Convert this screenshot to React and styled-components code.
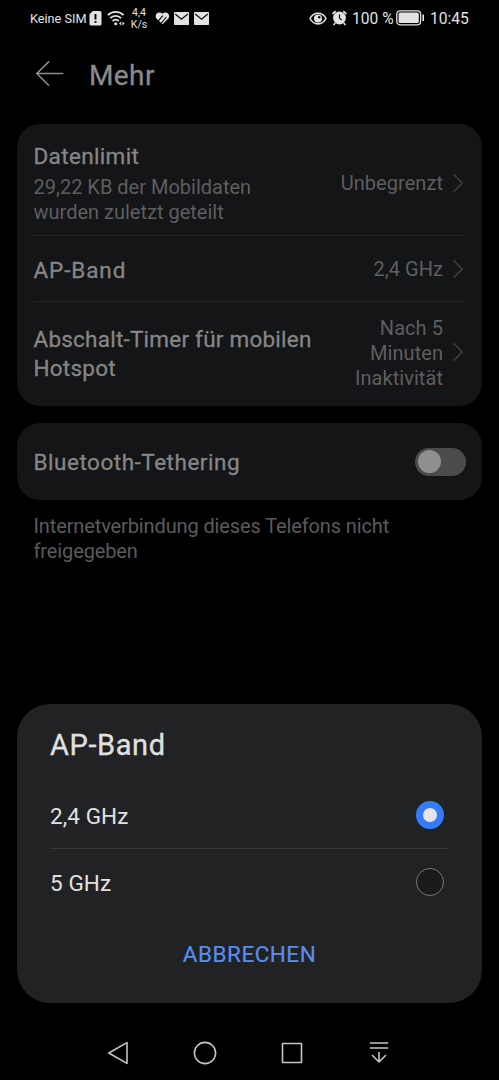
import React, { useState } from "react";
import styled, { createGlobalStyle } from "styled-components";

const GlobalStyle = createGlobalStyle`
  body {
    margin: 0;
    background: #000;
    font-family: Roboto, "Noto Sans", sans-serif;
  }
  * {
    box-sizing: border-box;
  }
`;

const Screen = styled.div`
  position: relative;
  display: flex;
  flex-direction: column;
  width: 499px;
  height: 1080px;
  background: #000;
  overflow: hidden;
`;

const StatusBar = styled.div`
  display: flex;
  justify-content: space-between;
  align-items: center;
  height: 36px;
  padding: 0 30px 0 30px;
  color: #e2e2e2;
`;

const StatusGroup = styled.div`
  display: flex;
  align-items: center;
  gap: ${(p) => p.$gap}px;
  height: 35px;
  svg {
    display: block;
    flex: none;
  }
`;

const StatusText = styled.span`
  width: ${(p) => p.$width}px;
  padding-top: 1px;
  font-size: ${(p) => p.$size}px;
  line-height: 20px;
  white-space: nowrap;
`;

const NetSpeed = styled.div`
  width: 18px;
  margin: 1px 2px 0 0;
  font-size: 10.5px;
  line-height: 12px;
  text-align: center;
`;

const Header = styled.div`
  display: flex;
  align-items: center;
  height: 76px;
  padding-left: 35px;
  margin-bottom: 11.5px;
`;

const PageTitle = styled.h1`
  margin: 3px 0 0 25px;
  color: #8b8b8b;
  font-size: 28px;
  font-weight: 400;
  line-height: 36px;
  letter-spacing: 0.4px;
  -webkit-text-stroke: 0.3px;
`;

const Card = styled.div`
  margin: 0 17px 17px;
  padding: 0 16px 0 16.5px;
  background: #141517;
  border-radius: 23px;
`;

const Row = styled.div`
  display: flex;
  justify-content: space-between;
  align-items: center;
  height: ${(p) => p.$height}px;
  padding: ${(p) => p.$pad || "0"};
  border-bottom: ${(p) => (p.$last ? "none" : "1px solid #222325")};
`;

const RowTitle = styled.div`
  padding-top: 2px;
  color: #868687;
  font-size: 22.5px;
  font-weight: 400;
  line-height: 29px;
  letter-spacing: ${(p) => p.$spacing || 0}px;
  -webkit-text-stroke: 0.3px;
  white-space: nowrap;
`;

const RowHint = styled.div`
  margin-top: 4px;
  color: #5d5e5f;
  font-size: 20px;
  line-height: 25.5px;
  white-space: nowrap;
`;

const RowEnd = styled.div`
  display: flex;
  align-items: center;
  gap: 9px;
`;

const RowValue = styled.div`
  padding-top: 2px;
  color: #5d5e5f;
  font-size: 20px;
  line-height: 25.2px;
  letter-spacing: 0.05px;
  text-align: right;
`;

const Track = styled.div`
  display: flex;
  align-items: center;
  justify-content: ${(p) => (p.$on ? "flex-end" : "flex-start")};
  width: 51px;
  height: 28px;
  padding: 0 2.5px;
  border-radius: 14px;
  background: #4b4b4b;
`;

const Knob = styled.div`
  width: 23px;
  height: 23px;
  border-radius: 50%;
  background: #8f8f8f;
`;

const Note = styled.div`
  margin: -3.5px 33.5px 0;
  color: #5b5b5b;
  font-size: 20px;
  line-height: 25.5px;
  letter-spacing: -0.12px;
`;

const Dialog = styled.div`
  position: absolute;
  left: 17px;
  right: 17px;
  bottom: 77px;
  height: 299px;
  padding: 23px 33px 0;
  border-radius: 33px;
  background: #212224;
  color: #e0e0e0;
`;

const DialogTitle = styled.h2`
  margin: 0 0 18.5px;
  font-size: 29px;
  font-weight: 400;
  line-height: 36px;
  letter-spacing: 0.6px;
  -webkit-text-stroke: 0.3px;
`;

const Option = styled.div`
  display: flex;
  justify-content: space-between;
  align-items: center;
  height: 67px;
  padding-right: 5.5px;
  font-size: 22.5px;
  letter-spacing: 0.1px;
  border-bottom: 1px solid ${(p) => (p.$last ? "transparent" : "#37383a")};
  cursor: pointer;
`;

const OptionLabel = styled.span`
  padding-top: 2px;
`;

const Radio = styled.div`
  width: 28px;
  height: 28px;
  border-radius: 50%;
  border: ${(p) => (p.$checked ? "7px solid #337bf7" : "1px solid #77787a")};
  background: ${(p) => (p.$checked ? "#e6e4e8" : "#191a1b")};
`;

const CancelButton = styled.button`
  display: block;
  margin: 22.5px auto 0;
  padding: 0;
  border: none;
  background: none;
  color: #5a8dee;
  font-family: inherit;
  font-size: 22.5px;
  font-weight: 400;
  line-height: 32px;
  letter-spacing: 0.5px;
  -webkit-text-stroke: 0.2px;
  cursor: pointer;
`;

const NavBar = styled.div`
  display: flex;
  justify-content: space-between;
  align-items: center;
  height: 55px;
  margin-top: auto;
  padding: 0 108px 0 106px;
`;

function Chevron() {
  return (
    <svg width="14" height="20" viewBox="0 0 14 20" fill="none" stroke="#3c3d3f" strokeWidth="1.6">
      <path d="M1.5 1.2L10.2 10L1.5 18.8" />
    </svg>
  );
}

function SimIcon() {
  return (
    <svg width="13" height="17" viewBox="0 0 13 17">
      <path d="M3.8 1H11A1.5 1.5 0 0 1 12.5 2.5V14A1.5 1.5 0 0 1 11 15.5H2A1.5 1.5 0 0 1 .5 14V4.3Z" fill="#e2e2e2" />
      <path d="M6.5 4V9.4M6.5 11V12.8" stroke="#000" strokeWidth="1.9" />
    </svg>
  );
}

function WifiIcon() {
  return (
    <svg width="19" height="17" viewBox="0 0 19 17" fill="none" stroke="#e2e2e2" strokeWidth="1.8">
      <path d="M.8 5.2C5.2 .8 12.2 .8 16.6 5.2" />
      <path d="M3.2 8.2C6.4 5 11 5 14.2 8.2" />
      <path d="M5.6 11C7.4 9.2 10 9.2 11.8 11" />
      <circle cx="8.7" cy="13.8" r="1.5" fill="#e2e2e2" stroke="none" />
      <path d="M14.2 11.4V15.6L12 13.5ZM15.4 11.4V15.6L17.6 13.5Z" fill="#e2e2e2" stroke="none" />
    </svg>
  );
}

function HealthIcon() {
  return (
    <svg width="15" height="14" viewBox="0 0 15 14">
      <path d="M7.4 13.2L1.4 7.6C-1.2 3.6 3.4 -1 7.4 2.8C11.4 -1 16 3.6 13.4 7.6Z" fill="#e2e2e2" />
      <path d="M2.8 10.6L7.8 4.6M6.2 12.2L11.4 6" stroke="#000" strokeWidth="1.1" />
    </svg>
  );
}

function MailIcon() {
  return (
    <svg width="15" height="13" viewBox="0 0 15 13">
      <rect width="15" height="13" rx=".8" fill="#e2e2e2" />
      <path d="M1.2 2L7.5 7.2L13.8 2" fill="none" stroke="#111" strokeWidth="1.3" />
    </svg>
  );
}

function EyeIcon() {
  return (
    <svg width="18" height="13" viewBox="0 0 18 13">
      <path d="M1 6.5C4.6 -.6 13.4 -.6 17 6.5C13.4 13.6 4.6 13.6 1 6.5Z" fill="none" stroke="#e2e2e2" strokeWidth="1.6" />
      <circle cx="9" cy="6.5" r="4" fill="#e2e2e2" />
      <circle cx="10.2" cy="5.2" r="1.2" fill="#000" />
    </svg>
  );
}

function AlarmIcon() {
  return (
    <svg width="15" height="16" viewBox="0 0 15 16">
      <circle cx="7.5" cy="8" r="6.4" fill="#e2e2e2" />
      <path d="M.6 4L3.8 1.1M14.4 4L11.2 1.1M3.2 13L1.6 15M11.8 13L13.4 15" stroke="#e2e2e2" strokeWidth="1.7" />
      <path d="M7.5 4.4V8.2L9.8 10.2" fill="none" stroke="#000" strokeWidth="1.1" />
    </svg>
  );
}

function BatteryIcon() {
  return (
    <svg width="29" height="16" viewBox="0 0 29 16">
      <rect x=".8" y=".8" width="23.8" height="14" rx="3.2" fill="none" stroke="#e2e2e2" strokeWidth="1.3" />
      <rect x="2.6" y="2.6" width="20.2" height="10.4" rx="1.6" fill="#e2e2e2" />
      <path d="M27.2 4.6V11" stroke="#e2e2e2" strokeWidth="1.6" />
    </svg>
  );
}

function BackArrow() {
  return (
    <svg width="29" height="26" viewBox="0 0 29 26" fill="none" stroke="#8d8d8d" strokeWidth="1.6" strokeLinecap="round">
      <path d="M1.8 12.5H27.6M13.6 .9L1.8 12.5L13.6 24.2" />
    </svg>
  );
}

function NavIcon({ children }) {
  return (
    <svg width="24" height="24" viewBox="0 0 24 24" fill="none" stroke="#c4c4c4" strokeWidth="1.6" strokeLinejoin="round">
      {children}
    </svg>
  );
}

export default function App() {
  const [band, setBand] = useState("2,4 GHz");
  const [open, setOpen] = useState(true);
  const [tethering, setTethering] = useState(false);

  return (
    <>
      <GlobalStyle />
      <Screen>
        <StatusBar>
          <StatusGroup $gap={4.5}>
            <StatusText $width={54.5} $size={12.7}>Keine SIM</StatusText>
            <SimIcon />
            <WifiIcon />
            <NetSpeed>4,4 K/s</NetSpeed>
            <HealthIcon />
            <MailIcon />
            <MailIcon />
          </StatusGroup>
          <StatusGroup $gap={5}>
            <EyeIcon />
            <AlarmIcon />
            <StatusText $width={39} $size={15.6}>100 %</StatusText>
            <BatteryIcon />
            <StatusText $width={39} $size={15.6}>10:45</StatusText>
          </StatusGroup>
        </StatusBar>

        <Header>
          <BackArrow />
          <PageTitle>Mehr</PageTitle>
        </Header>

        <Card>
          <Row $height={112.5} $pad="7px 0 0">
            <div>
              <RowTitle $spacing={0.35}>Datenlimit</RowTitle>
              <RowHint>
                29,22 KB der Mobildaten
                <br />
                wurden zuletzt geteilt
              </RowHint>
            </div>
            <RowEnd>
              <RowValue>Unbegrenzt</RowValue>
              <Chevron />
            </RowEnd>
          </Row>
          <Row $height={66} $pad="1px 0 0">
            <RowTitle $spacing={0.9}>AP-Band</RowTitle>
            <RowEnd>
              <RowValue>{band}</RowValue>
              <Chevron />
            </RowEnd>
          </Row>
          <Row $height={104} $pad="0 0 3px" $last>
            <RowTitle $spacing={0.23}>
              Abschalt-Timer für mobilen
              <br />
              Hotspot
            </RowTitle>
            <RowEnd>
              <RowValue>
                Nach 5<br />
                Minuten
                <br />
                Inaktivität
              </RowValue>
              <Chevron />
            </RowEnd>
          </Row>
        </Card>

        <Card>
          <Row $height={77} $last>
            <RowTitle $spacing={0.52}>Bluetooth-Tethering</RowTitle>
            <Track $on={tethering} onClick={() => setTethering(!tethering)}>
              <Knob />
            </Track>
          </Row>
        </Card>
        <Note>Internetverbindung dieses Telefons nicht freigegeben</Note>

        {open && (
          <Dialog>
            <DialogTitle>AP-Band</DialogTitle>
            <Option onClick={() => setBand("2,4 GHz")}>
              <OptionLabel>2,4 GHz</OptionLabel>
              <Radio $checked={band === "2,4 GHz"} />
            </Option>
            <Option $last onClick={() => setBand("5 GHz")}>
              <OptionLabel>5 GHz</OptionLabel>
              <Radio $checked={band === "5 GHz"} />
            </Option>
            <CancelButton onClick={() => setOpen(false)}>ABBRECHEN</CancelButton>
          </Dialog>
        )}

        <NavBar>
          <NavIcon>
            <path d="M2.8 12L21 1.6V22.4Z" />
          </NavIcon>
          <NavIcon>
            <circle cx="12" cy="12" r="10.6" />
          </NavIcon>
          <NavIcon>
            <rect x="2.5" y="2.5" width="19" height="19" />
          </NavIcon>
          <NavIcon>
            <path d="M2.8 2H21.2M2.8 7H21.2M12 11V21M5 14L12 21L19 14" />
          </NavIcon>
        </NavBar>
      </Screen>
    </>
  );
}
